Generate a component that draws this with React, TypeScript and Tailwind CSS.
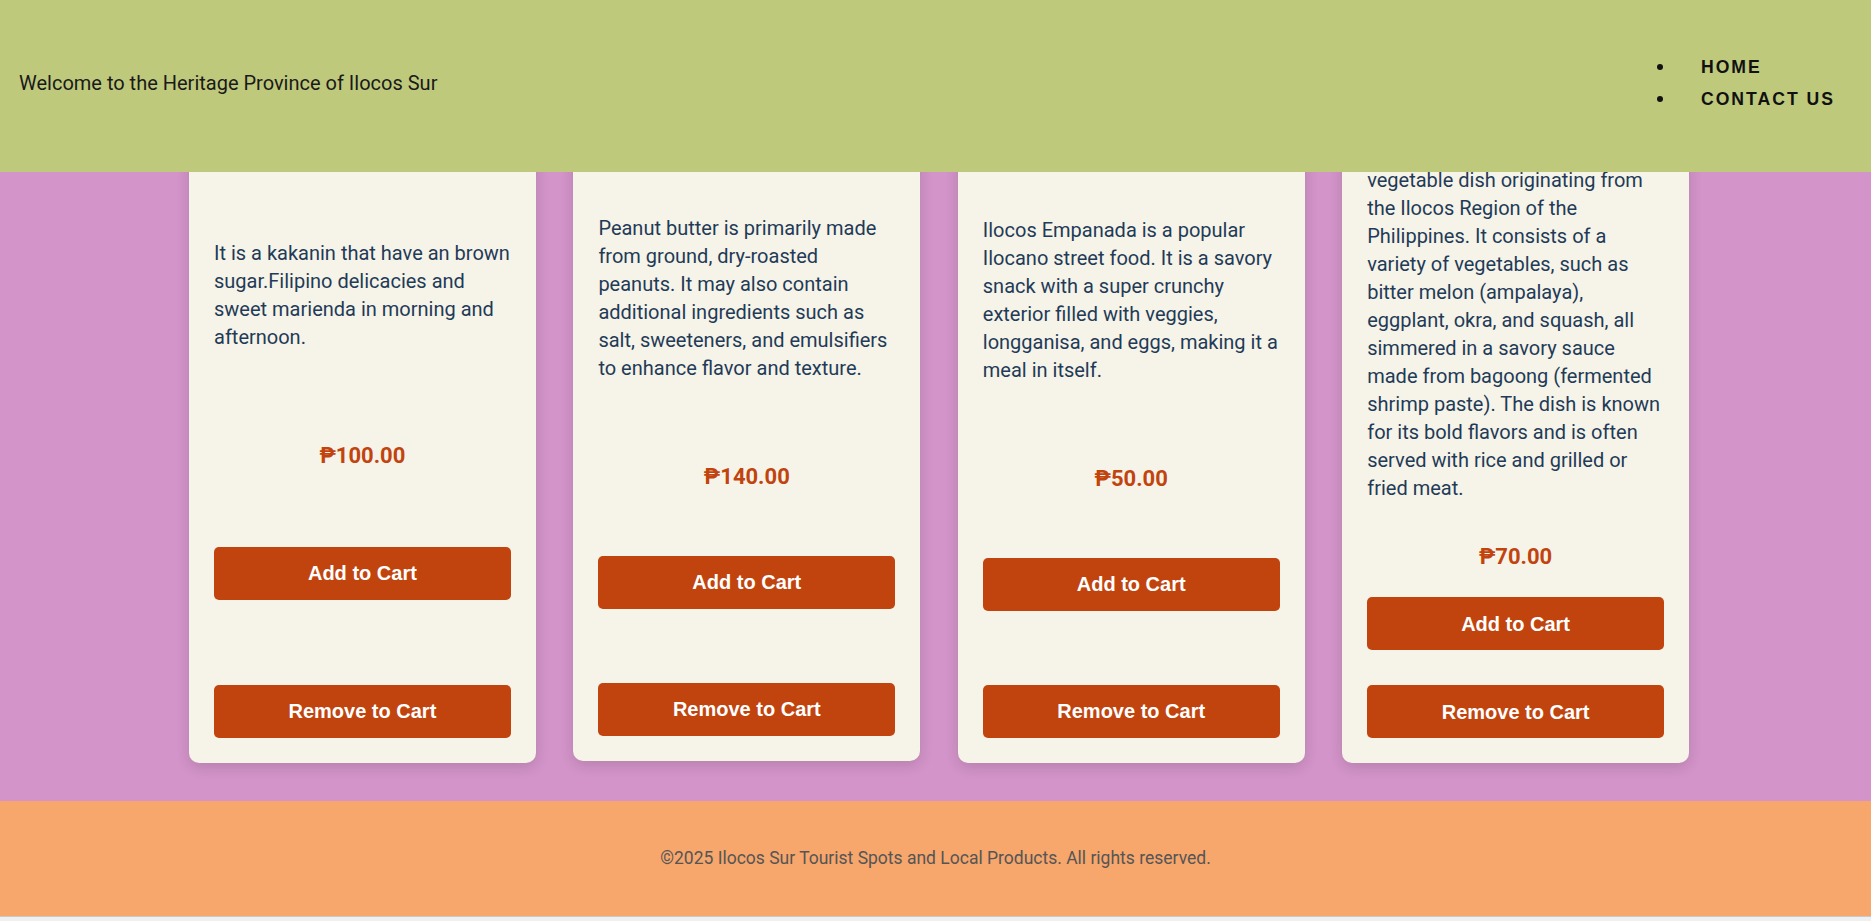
import React from "react";

type Product = {
  name: string;
  desc: string;
  price: string;
  lift?: boolean;
};

const products: Product[] = [
  {
    name: "Tinubong",
    desc: "It is a kakanin that have an brown sugar.Filipino delicacies and sweet marienda in morning and afternoon.",
    price: "₱100.00",
  },
  {
    name: "Peanut Butter",
    desc: "Peanut butter is primarily made from ground, dry-roasted peanuts. It may also contain additional ingredients such as salt, sweeteners, and emulsifiers to enhance flavor and texture.",
    price: "₱140.00",
    lift: true,
  },
  {
    name: "Ilocos Empanada",
    desc: "Ilocos Empanada is a popular Ilocano street food. It is a savory snack with a super crunchy exterior filled with veggies, longganisa, and eggs, making it a meal in itself.",
    price: "₱50.00",
  },
  {
    name: "Pinakbet",
    desc: "Pinakbet is a popular Ilocano vegetable dish originating from the Ilocos Region of the Philippines. It consists of a variety of vegetables, such as bitter melon (ampalaya), eggplant, okra, and squash, all simmered in a savory sauce made from bagoong (fermented shrimp paste). The dish is known for its bold flavors and is often served with rice and grilled or fried meat.",
    price: "₱70.00",
  },
];

function Card({ p }: { p: Product }) {
  return (
    <div
      className={
        "flex flex-col justify-between rounded-[10px] bg-[#f6f3e9] p-[25px] shadow-[0_4px_14px_rgba(0,0,0,0.14)] " +
        (p.lift ? "-translate-y-[2px]" : "")
      }
    >
      <div className="h-[180px] w-full rounded-[6px] bg-[#d9d2c0]" />
      <h3 className="mt-[16px] h-[24px] text-center text-[20px] font-bold leading-[24px] text-[#1f3b57]">
        {p.name}
      </h3>
      <p className="mt-[36px] text-[20px] leading-[28px] text-[#1f3b57]">{p.desc}</p>
      <p className="mt-[42px] text-center text-[22px] font-bold leading-[26px] text-[#c1440e]">
        {p.price}
      </p>
      <button className="mt-[27px] h-[53px] w-full rounded-[5px] bg-[#c1440e] font-['Liberation_Sans',Arial,sans-serif] text-[20px] font-bold text-white">
        Add to Cart
      </button>
      <button className="mt-[35px] h-[53px] w-full rounded-[5px] bg-[#c1440e] font-['Liberation_Sans',Arial,sans-serif] text-[20px] font-bold text-white">
        Remove to Cart
      </button>
    </div>
  );
}

export default function App() {
  return (
    <div className="flex h-[921px] flex-col overflow-hidden bg-white font-['Roboto',sans-serif]">
      <header className="fixed inset-x-0 top-0 z-10 flex h-[172px] items-center justify-between bg-[#bfc97c] pb-[6px] pl-[19px] pr-[36px]">
        <h1 className="text-[20px] font-normal text-[#1a1a1a]">
          Welcome to the Heritage Province of Ilocos Sur
        </h1>
        <nav>
          <ul className="flex flex-col">
            {["HOME", "CONTACT US"].map((t) => (
              <li key={t} className="flex h-[32px] items-center">
                <span className="mr-[38px] h-[6px] w-[6px] rounded-full bg-[#111]" />
                <a
                  href="#"
                  className="font-['Liberation_Sans',Arial,sans-serif] text-[17.6px] font-bold tracking-[2px] text-[#111]"
                >
                  {t}
                </a>
              </li>
            ))}
          </ul>
        </nav>
      </header>

      <main className="-mt-[163px] shrink-0 bg-[#d394c9] pb-[38px] pl-[189px] pr-[182px] pt-[20px]">
        <div className="grid grid-cols-4 gap-x-[37.6px]">
          {products.map((p) => (
            <Card key={p.name} p={p} />
          ))}
        </div>
      </main>

      <footer className="flex h-[115px] shrink-0 items-center justify-center bg-[#f7a66c] text-[17.5px] text-[#555]">
        ©2025 Ilocos Sur Tourist Spots and Local Products. All rights reserved.
      </footer>
      <div className="h-[5px] shrink-0 border-t border-[#c9c9c9] bg-[#f0f0f0]" />
    </div>
  );
}
